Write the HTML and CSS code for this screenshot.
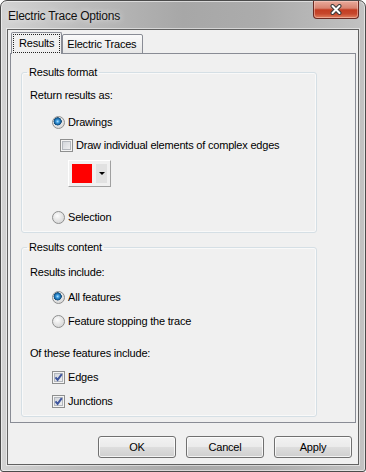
FILE: index.html
```html
<!DOCTYPE html>
<html lang="en">
<head>
    <meta charset="UTF-8">
    <title>Electric Trace Options</title>
    <link rel="stylesheet" href="styles.css">
</head>
<body>
    <div class="window">
        <div class="titlebar">
            <span class="title">Electric Trace Options</span>
            <button class="close-btn" aria-label="Close">
                <svg width="14" height="11" viewBox="0 0 14 11">
                    <path d="M3.5 2 L10.5 9 M10.5 2 L3.5 9" stroke="#3b3b3b" stroke-width="4" stroke-linecap="round"/>
                    <path d="M3.5 2 L10.5 9 M10.5 2 L3.5 9" stroke="#ffffff" stroke-width="2" stroke-linecap="round"/>
                </svg>
            </button>
        </div>

        <div class="client">
            <div class="tabs">
                <div class="tab active"><span class="focus">Results</span></div>
                <div class="tab">Electric Traces</div>
            </div>

            <div class="panel">
                <fieldset class="group group-format">
                    <legend>Results format</legend>
                    <div class="text-row return-row">Return results as:</div>
                    <label class="opt radio-indent drawings-row"><span class="radio checked"></span>Drawings</label>
                    <label class="opt check-indent complex-row"><span class="check"></span>Draw individual elements of complex edges</label>
                    <div class="color-btn">
                        <span class="swatch"></span>
                        <span class="drop"><span class="arrow"></span></span>
                    </div>
                    <label class="opt radio-indent selection-row"><span class="radio"></span>Selection</label>
                </fieldset>

                <fieldset class="group group-content">
                    <legend>Results content</legend>
                    <div class="text-row include-row">Results include:</div>
                    <label class="opt radio-indent all-row"><span class="radio checked"></span>All features</label>
                    <label class="opt radio-indent stopping-row"><span class="radio"></span>Feature stopping the trace</label>
                    <div class="text-row these-row">Of these features include:</div>
                    <label class="opt radio-indent edges-row">
                        <span class="check">
                            <svg width="11" height="11" viewBox="0 0 11 11"><path d="M2.5 5.3 L4.6 7.8 L8.8 2.2" fill="none" stroke="#3f569e" stroke-width="2"/></svg>
                        </span>Edges
                    </label>
                    <label class="opt radio-indent junctions-row">
                        <span class="check">
                            <svg width="11" height="11" viewBox="0 0 11 11"><path d="M2.5 5.3 L4.6 7.8 L8.8 2.2" fill="none" stroke="#3f569e" stroke-width="2"/></svg>
                        </span>Junctions
                    </label>
                </fieldset>
            </div>

            <div class="buttons">
                <button class="btn">OK</button>
                <button class="btn">Cancel</button>
                <button class="btn">Apply</button>
            </div>
        </div>
    </div>
</body>
</html>
```

FILE: styles.css
```css
* {
    margin: 0;
    padding: 0;
    box-sizing: border-box;
}

body {
    font-family: 'Liberation Sans', Arial, sans-serif;
    font-size: 11px;
    letter-spacing: -0.2px;
    color: #000;
    background-color: #fff;
}

/* Outer window frame */
.window {
    width: 366px;
    height: 472px;
    display: flex;
    flex-direction: column;
    padding: 0 6px 6px;
    border: 1px solid #4b4b4b;
    border-radius: 7px 7px 3px 3px;
    background: linear-gradient(to right, #d3d3d3 0%, #bcbcbc 22%, #a7a7a7 50%, #acacac 72%, #c2c2c2 100%);
    box-shadow: inset 0 0 0 1px rgba(255, 255, 255, 0.55);
}

.titlebar {
    height: 28px;
    display: flex;
    align-items: flex-start;
    padding-left: 1px;
}

.title {
    padding-top: 8px;
    font-size: 12px;
    line-height: 14px;
    letter-spacing: -0.25px;
    color: #111;
    text-shadow: 0 0 6px rgba(255, 255, 255, 0.9);
}

.close-btn {
    margin-left: auto;
    width: 46px;
    height: 18px;
    display: flex;
    align-items: center;
    justify-content: center;
    border: 1px solid #6b2a22;
    border-top: none;
    border-radius: 0 0 4px 4px;
    background: linear-gradient(#e9aa9b 0%, #d88471 42%, #c33d22 52%, #c6472c 75%, #e0805f 100%);
    box-shadow: inset 0 0 0 1px rgba(255, 220, 210, 0.45);
}

/* Client area of the dialog */
.client {
    flex: 1;
    display: flex;
    flex-direction: column;
    background-color: #f0f0f0;
    border: 1px solid #616161;
    box-shadow: 0 0 0 1px rgba(255, 255, 255, 0.5);
}

.tabs {
    height: 24px;
    display: flex;
    align-items: flex-end;
    padding-left: 3px;
    margin-bottom: -1px;
    position: relative;
    z-index: 1;
}

.tab {
    height: 20px;
    padding: 0 6px 0 4px;
    line-height: 18px;
    border: 1px solid #898c95;
    border-radius: 2px 2px 0 0;
    background: linear-gradient(#fafafa, #e6e6e6);
}

.tab.active {
    height: 22px;
    padding: 1px 1px 0 1px;
    border-bottom: none;
    background: #f0f0f0;
}

.focus {
    display: block;
    padding: 0 5px 0 5px;
    line-height: 17px;
    border: 1px dotted #222;
}

.panel {
    flex: 1;
    margin: 0 2px;
    padding: 11px 0 5px 10px;
    border: 1px solid #898c95;
    background-color: #f0f0f0;
}

/* Group boxes */
.group {
    width: 296px;
    padding: 0 8px 7px;
    border: 1px solid #d5dfe5;
    border-radius: 3px;
    box-shadow: inset 0 0 0 1px rgba(255, 255, 255, 0.6);
}

.group legend {
    margin-left: -3px;
    padding: 0 2px;
    line-height: 14px;
}

.group-content {
    margin-top: 7px;
}

.text-row {
    line-height: 14px;
}

.opt {
    height: 16px;
    display: flex;
    align-items: center;
    gap: 3px;
}

.radio-indent {
    margin-left: 22px;
}

.check-indent {
    margin-left: 30px;
}

.return-row { margin-top: 9px; }
.drawings-row { margin-top: 12px; }
.complex-row { margin-top: 7px; }
.selection-row { margin-top: 22px; }
.include-row { margin-top: 11px; }
.all-row { margin-top: 10px; }
.stopping-row { margin-top: 8px; }
.these-row { margin-top: 17px; }
.edges-row { margin-top: 9px; }
.junctions-row { margin-top: 8px; }

/* Themed radio buttons */
.radio {
    flex: none;
    width: 13px;
    height: 13px;
    border-radius: 50%;
    border: 1px solid #8e8f8f;
    background: radial-gradient(circle at 40% 35%, #fdfdfd 0%, #e6e6e6 45%, #cfcfcf 100%);
}

.radio.checked {
    background:
        radial-gradient(circle at 42% 40%, #b4e6ff 0, #3a9ae0 1.6px, #12588f 3.4px, #1b4c74 3.9px, rgba(0, 0, 0, 0) 4.3px),
        radial-gradient(circle at 40% 35%, #fdfdfd 0%, #e6e6e6 45%, #cfcfcf 100%);
}

/* Themed check boxes */
.check {
    flex: none;
    width: 13px;
    height: 13px;
    border: 1px solid #8e8f8f;
    background: linear-gradient(135deg, #cbcfd5, #f6f6f6);
    box-shadow: inset 0 0 0 1px #f4f4f4, inset 0 0 0 2px #b3b7bd;
}

.check svg {
    display: block;
}

/* Colour picker button */
.color-btn {
    width: 43px;
    height: 27px;
    margin: 7px 0 0 38px;
    display: flex;
    gap: 4px;
    padding: 3px;
    border: 1px solid;
    border-color: #ffffff #a0a0a0 #a0a0a0 #ffffff;
}

.swatch {
    width: 21px;
    height: 19px;
    background-color: #ff0000;
}

.drop {
    width: 11px;
    display: flex;
    align-items: center;
    justify-content: center;
    background-color: #e1e1e1;
}

.arrow {
    border-left: 3px solid transparent;
    border-right: 3px solid transparent;
    border-top: 3px solid #000;
}

/* Dialog buttons */
.buttons {
    display: flex;
    justify-content: flex-end;
    gap: 10px;
    margin-top: 13px;
    padding: 0 6px 6px 0;
}

.btn {
    width: 78px;
    height: 22px;
    font-family: inherit;
    font-size: 11px;
    letter-spacing: -0.2px;
    color: #000;
    border: 1px solid #707070;
    border-radius: 3px;
    background: linear-gradient(#f2f2f2 0%, #ebebeb 48%, #dddddd 52%, #cfcfcf 100%);
    box-shadow: inset 0 0 0 1px rgba(255, 255, 255, 0.75);
}
```
